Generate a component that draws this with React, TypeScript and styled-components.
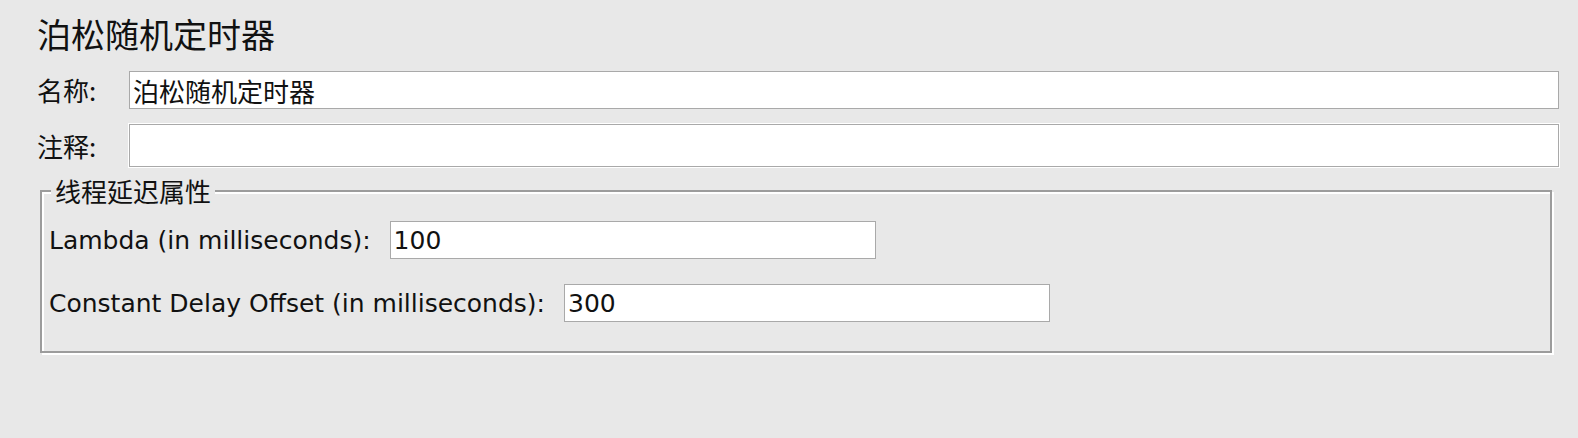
import React from "react";
import styled, { createGlobalStyle } from "styled-components";

const GlobalStyle = createGlobalStyle`
  html, body {
    margin: 0;
    padding: 0;
    background: #e8e8e8;
  }
  body {
    font-family: "DejaVu Sans", "Noto Sans CJK SC", sans-serif;
    color: #111;
  }
`;

const Page = styled.div`
  width: 1578px;
  height: 438px;
  box-sizing: border-box;
  padding: 14px 19px 0 37px;
  background: #e8e8e8;
`;

const Title = styled.h1`
  margin: 0;
  font-family: "Noto Sans CJK SC", sans-serif;
  font-size: 34px;
  font-weight: 400;
  line-height: 40px;
  color: #111;
`;

const Form = styled.div`
  display: grid;
  grid-template-columns: 92px 1fr;
  row-gap: 15px;
  align-items: center;
  margin-top: 17px;
`;

const Label = styled.label`
  font-family: "Noto Sans CJK SC", sans-serif;
  font-size: 26px;
  line-height: 30px;
`;

const TextField = styled.div<{ $tall?: boolean }>`
  height: ${(p) => (p.$tall ? "43px" : "38px")};
  box-sizing: border-box;
  border: 1px solid #a9a9a9;
  background: #fff;
  padding: 0 3px;
  display: flex;
  align-items: center;
  font-family: "DejaVu Sans", "Noto Sans CJK SC", sans-serif;
  font-size: 25px;
  box-shadow: ${(p) => (p.$tall ? "0 0 0 1px #fff" : "none")};
`;

const NameText = styled.span`
  font-family: "Noto Sans CJK SC", sans-serif;
  font-size: 26px;
`;

const Group = styled.fieldset`
  margin: 9px 7px 0 3px;
  padding: 15px 0 29px 7px;
  border: 2px solid #9c9c9c;
  box-shadow: inset 2px 2px 0 #fff, 2px 2px 0 #fff;
  display: flex;
  flex-direction: column;
  gap: 25px;
  min-width: 0;
`;

const Legend = styled.legend`
  margin-left: 2px;
  padding: 0 4px;
  font-family: "Noto Sans CJK SC", sans-serif;
  font-size: 26px;
  line-height: 30px;
  background: #e8e8e8;
`;

const Row = styled.div`
  display: flex;
  align-items: center;
  gap: 19px;
`;

const RowLabel = styled.span`
  font-size: 25px;
  white-space: nowrap;
`;

const NumberField = styled(TextField)`
  width: 486px;
`;

export default function App() {
  return (
    <Page>
      <GlobalStyle />
      <Title>泊松随机定时器</Title>
      <Form>
        <Label>名称:</Label>
        <TextField>
          <NameText>泊松随机定时器</NameText>
        </TextField>
        <Label>注释:</Label>
        <TextField $tall />
      </Form>
      <Group>
        <Legend>线程延迟属性</Legend>
        <Row>
          <RowLabel>Lambda (in milliseconds):</RowLabel>
          <NumberField>100</NumberField>
        </Row>
        <Row>
          <RowLabel>Constant Delay Offset (in milliseconds):</RowLabel>
          <NumberField>300</NumberField>
        </Row>
      </Group>
    </Page>
  );
}
